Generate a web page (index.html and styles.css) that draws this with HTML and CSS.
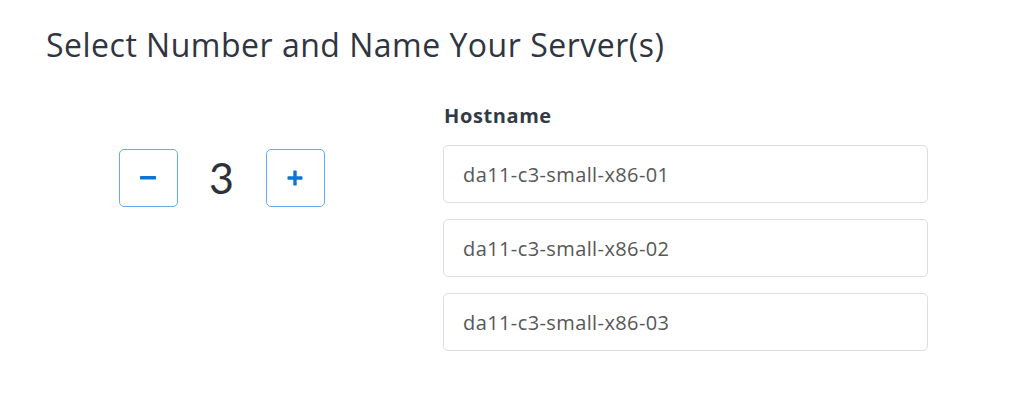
FILE: index.html
```html
<!DOCTYPE html>
<html lang="en">
<head>
    <meta charset="UTF-8">
    <meta name="viewport" content="width=device-width, initial-scale=1.0">
    <title>Select Number and Name Your Server(s)</title>
    <link rel="stylesheet" href="styles.css">
</head>
<body>
    <div class="page">
        <h2 class="section-title">Select Number and Name Your Server(s)</h2>

        <div class="server-row">
            <div class="quantity-col">
                <div class="stepper">
                    <button class="step-btn" type="button" aria-label="Decrease">
                        <svg width="16" height="4" viewBox="0 0 16 4"><rect x="0" y="0" width="16" height="3.4" rx="0.6" fill="#0b74d9"/></svg>
                    </button>
                    <span class="step-value">3</span>
                    <button class="step-btn" type="button" aria-label="Increase">
                        <svg width="16" height="16" viewBox="0 0 16 16"><rect x="0.5" y="6.3" width="15" height="3.4" rx="0.6" fill="#0b74d9"/><rect x="6.3" y="0.5" width="3.4" height="15" rx="0.6" fill="#0b74d9"/></svg>
                    </button>
                </div>
            </div>

            <div class="hostname-col">
                <label class="field-label">Hostname</label>
                <input class="host-input" type="text" value="da11-c3-small-x86-01">
                <input class="host-input" type="text" value="da11-c3-small-x86-02">
                <input class="host-input" type="text" value="da11-c3-small-x86-03">
            </div>
        </div>
    </div>
</body>
</html>
```

FILE: styles.css
```css
* {
    margin: 0;
    padding: 0;
    box-sizing: border-box;
}

body {
    font-family: 'Open Sans', Lato, sans-serif;
    background: #ffffff;
    color: #2e3440;
}

.page {
    padding-top: 24px;
}

.section-title {
    font-size: 32px;
    font-weight: 400;
    line-height: 42px;
    letter-spacing: 0.5px;
    color: #30353f;
    padding-left: 46px;
    margin-bottom: 38px;
}

.server-row {
    display: grid;
    grid-template-columns: 443px 485px;
}

.quantity-col {
    display: flex;
    justify-content: center;
    padding-top: 45px;
}

.stepper {
    display: flex;
    align-items: center;
    height: 58px;
}

.step-btn {
    width: 59px;
    height: 58px;
    border: 1px solid #66adef;
    border-radius: 5px;
    background: #fff;
    display: flex;
    align-items: center;
    justify-content: center;
    cursor: pointer;
}

.step-value {
    width: 88px;
    text-align: center;
    font-family: Lato, sans-serif;
    font-size: 43px;
    line-height: 58px;
    color: #2c313a;
}

.hostname-col {
    display: flex;
    flex-direction: column;
}

.field-label {
    font-size: 20px;
    font-weight: 700;
    line-height: 24px;
    letter-spacing: 0.6px;
    color: #343a45;
    margin-bottom: 17px;
    padding-left: 1px;
}

.host-input {
    height: 58px;
    width: 100%;
    border: 1px solid #dedede;
    border-radius: 5px;
    padding: 0 19px;
    font-family: 'Open Sans', Lato, sans-serif;
    font-size: 20px;
    letter-spacing: 0.4px;
    color: #575757;
    margin-bottom: 16px;
    outline: none;
}
```
